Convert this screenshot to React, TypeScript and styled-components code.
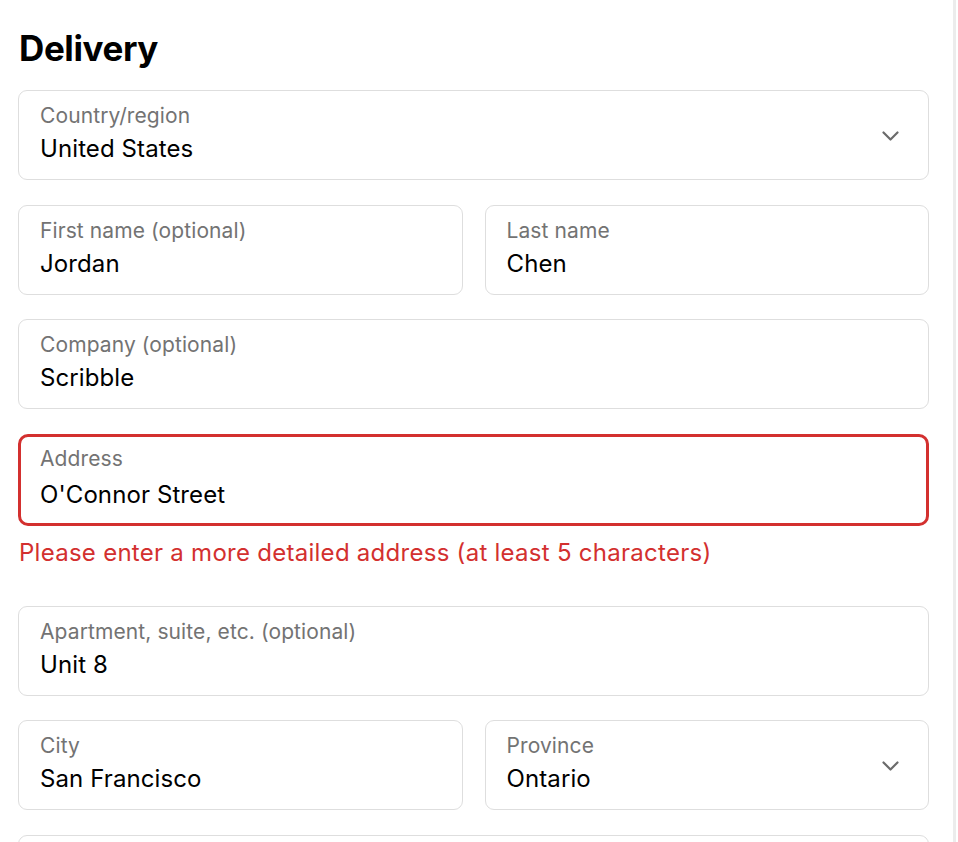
import React from "react";
import styled, { createGlobalStyle } from "styled-components";

const GlobalStyle = createGlobalStyle`
  html, body {
    margin: 0;
    padding: 0;
    background: #ffffff;
  }
  body {
    font-family: Inter, "Noto Sans", "Liberation Sans", sans-serif;
    color: #000000;
    -webkit-font-smoothing: antialiased;
  }
`;

const Page = styled.div`
  display: flex;
  min-height: 100vh;
`;

const Column = styled.main`
  width: 956px;
  box-sizing: border-box;
  padding: 26px 24px 40px 18px;
  border-right: 3px solid #ececec;
`;

const Heading = styled.h2`
  margin: 0 0 20px 0;
  padding-left: 1px;
  font-size: 35px;
  line-height: 44px;
  font-weight: 700;
  letter-spacing: -0.4px;
`;

const Form = styled.div`
  display: flex;
  flex-direction: column;
  gap: 24.7px;
`;

const Row = styled.div`
  display: grid;
  grid-template-columns: 1fr 1fr;
  gap: 22px;
`;

const Group = styled.div`
  display: flex;
  flex-direction: column;
`;

const Field = styled.div<{ $error?: boolean }>`
  position: relative;
  box-sizing: border-box;
  height: ${(p) => (p.$error ? 92 : 90)}px;
  border: ${(p) => (p.$error ? "3px solid #d3302f" : "1px solid #dedede")};
  border-radius: ${(p) => (p.$error ? 10 : 9)}px;
  padding: ${(p) => (p.$error ? "10px 19px 14px" : "13px 21px 15px")};
  background: #ffffff;
`;

const Label = styled.div`
  font-size: 21px;
  line-height: 24px;
  color: #737373;
  letter-spacing: 0.1px;
`;

const Value = styled.div<{ $error?: boolean }>`
  margin-top: ${(p) => (p.$error ? 9 : 6)}px;
  font-size: 24px;
  line-height: 30px;
  color: #000000;
  letter-spacing: 0.1px;
`;

const Chevron = styled.svg`
  position: absolute;
  right: 29px;
  top: 50%;
  margin-top: -4px;
  width: 17px;
  height: 10px;
`;

const ErrorText = styled.div`
  margin: 12px 0 13px 1px;
  font-size: 24px;
  line-height: 30px;
  color: #d3302f;
  letter-spacing: 0.27px;
`;

type FieldProps = {
  label: string;
  value: string;
  select?: boolean;
  error?: boolean;
};

const TextField = ({ label, value, select, error }: FieldProps) => (
  <Field $error={error}>
    <Label>{label}</Label>
    <Value $error={error}>{value}</Value>
    {select && (
      <Chevron viewBox="0 0 17 10" fill="none">
        <polyline
          points="1.5,1.5 8.5,8.5 15.5,1.5"
          stroke="#6b6b6b"
          strokeWidth="2.2"
          strokeLinecap="round"
          strokeLinejoin="round"
        />
      </Chevron>
    )}
  </Field>
);

export default function App() {
  return (
    <Page>
      <GlobalStyle />
      <Column>
        <Heading>Delivery</Heading>
        <Form>
          <TextField label="Country/region" value="United States" select />
          <Row>
            <TextField label="First name (optional)" value="Jordan" />
            <TextField label="Last name" value="Chen" />
          </Row>
          <TextField label="Company (optional)" value="Scribble" />
          <Group>
            <TextField label="Address" value="O'Connor Street" error />
            <ErrorText>
              Please enter a more detailed address (at least 5 characters)
            </ErrorText>
          </Group>
          <TextField label="Apartment, suite, etc. (optional)" value="Unit 8" />
          <Row>
            <TextField label="City" value="San Francisco" />
            <TextField label="Province" value="Ontario" select />
          </Row>
          <TextField label="Postal code" value="94107" />
        </Form>
      </Column>
    </Page>
  );
}
